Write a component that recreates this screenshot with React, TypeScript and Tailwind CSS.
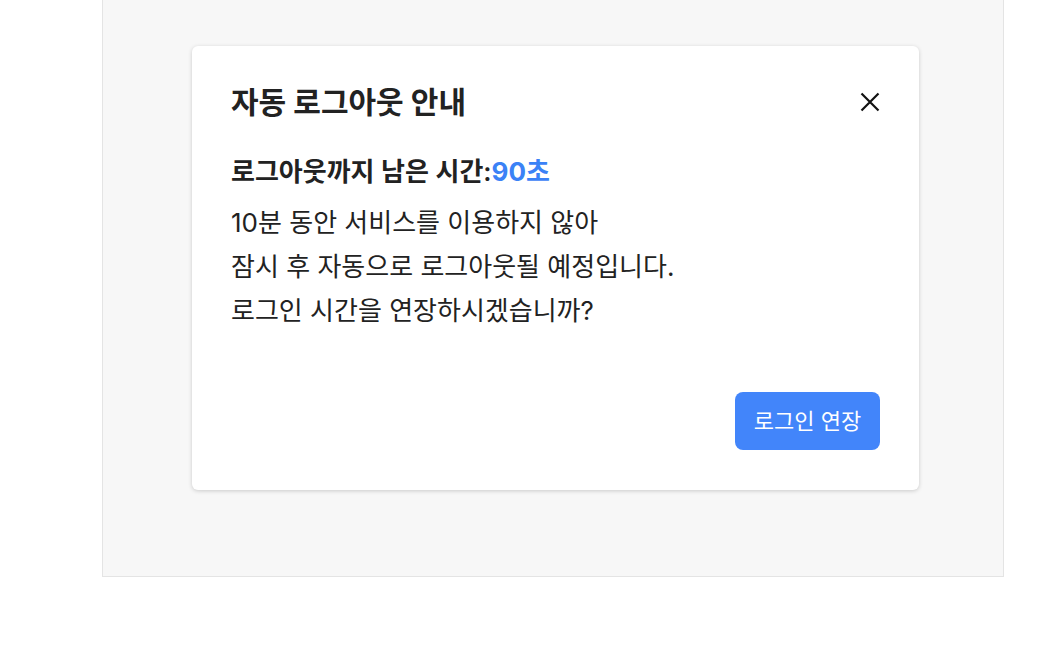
export default function App() {
  return (
    <div
      className="w-[1056px] h-[659px] bg-white"
      style={{ fontFamily: 'Inter, "Noto Sans CJK KR", sans-serif' }}
    >
      <div className="ml-[102px] w-[902px] h-[577px] bg-[#f7f7f7] border-x border-b border-[#e4e4e4] pt-[46px] pl-[89px]">
        <div className="w-[727px] bg-white rounded-[6px] shadow-[0_1px_4px_rgba(0,0,0,0.18)] px-[39px] pt-[40px] pb-[40px] text-[#222]">
          <div className="flex items-center justify-between h-[32px]">
            <h2 className="text-[30px] font-bold leading-[32px]">자동 로그아웃 안내</h2>
            <button className="w-[22px] h-[22px] flex items-center justify-center mr-[-1px]">
              <svg width="20" height="20" viewBox="0 0 20 20" fill="none">
                <path d="M1.5 1.5L18.5 18.5M18.5 1.5L1.5 18.5" stroke="#111" strokeWidth="2.2" />
              </svg>
            </button>
          </div>
          <p className="mt-[39px] text-[26px] font-semibold leading-[30px]">
            로그아웃까지 남은 시간:<span className="text-[#3b82f6] font-bold">90초</span>
          </p>
          <div className="mt-[14px] text-[26px] leading-[44px]">
            <p>10분 동안 서비스를 이용하지 않아</p>
            <p>잠시 후 자동으로 로그아웃될 예정입니다.</p>
            <p>로그인 시간을 연장하시겠습니까?</p>
          </div>
          <div className="flex justify-end mt-[59px]">
            <button className="w-[145px] h-[58px] rounded-[8px] bg-[#4285fa] text-white text-[22px]">
              로그인 연장
            </button>
          </div>
        </div>
      </div>
    </div>
  );
}
